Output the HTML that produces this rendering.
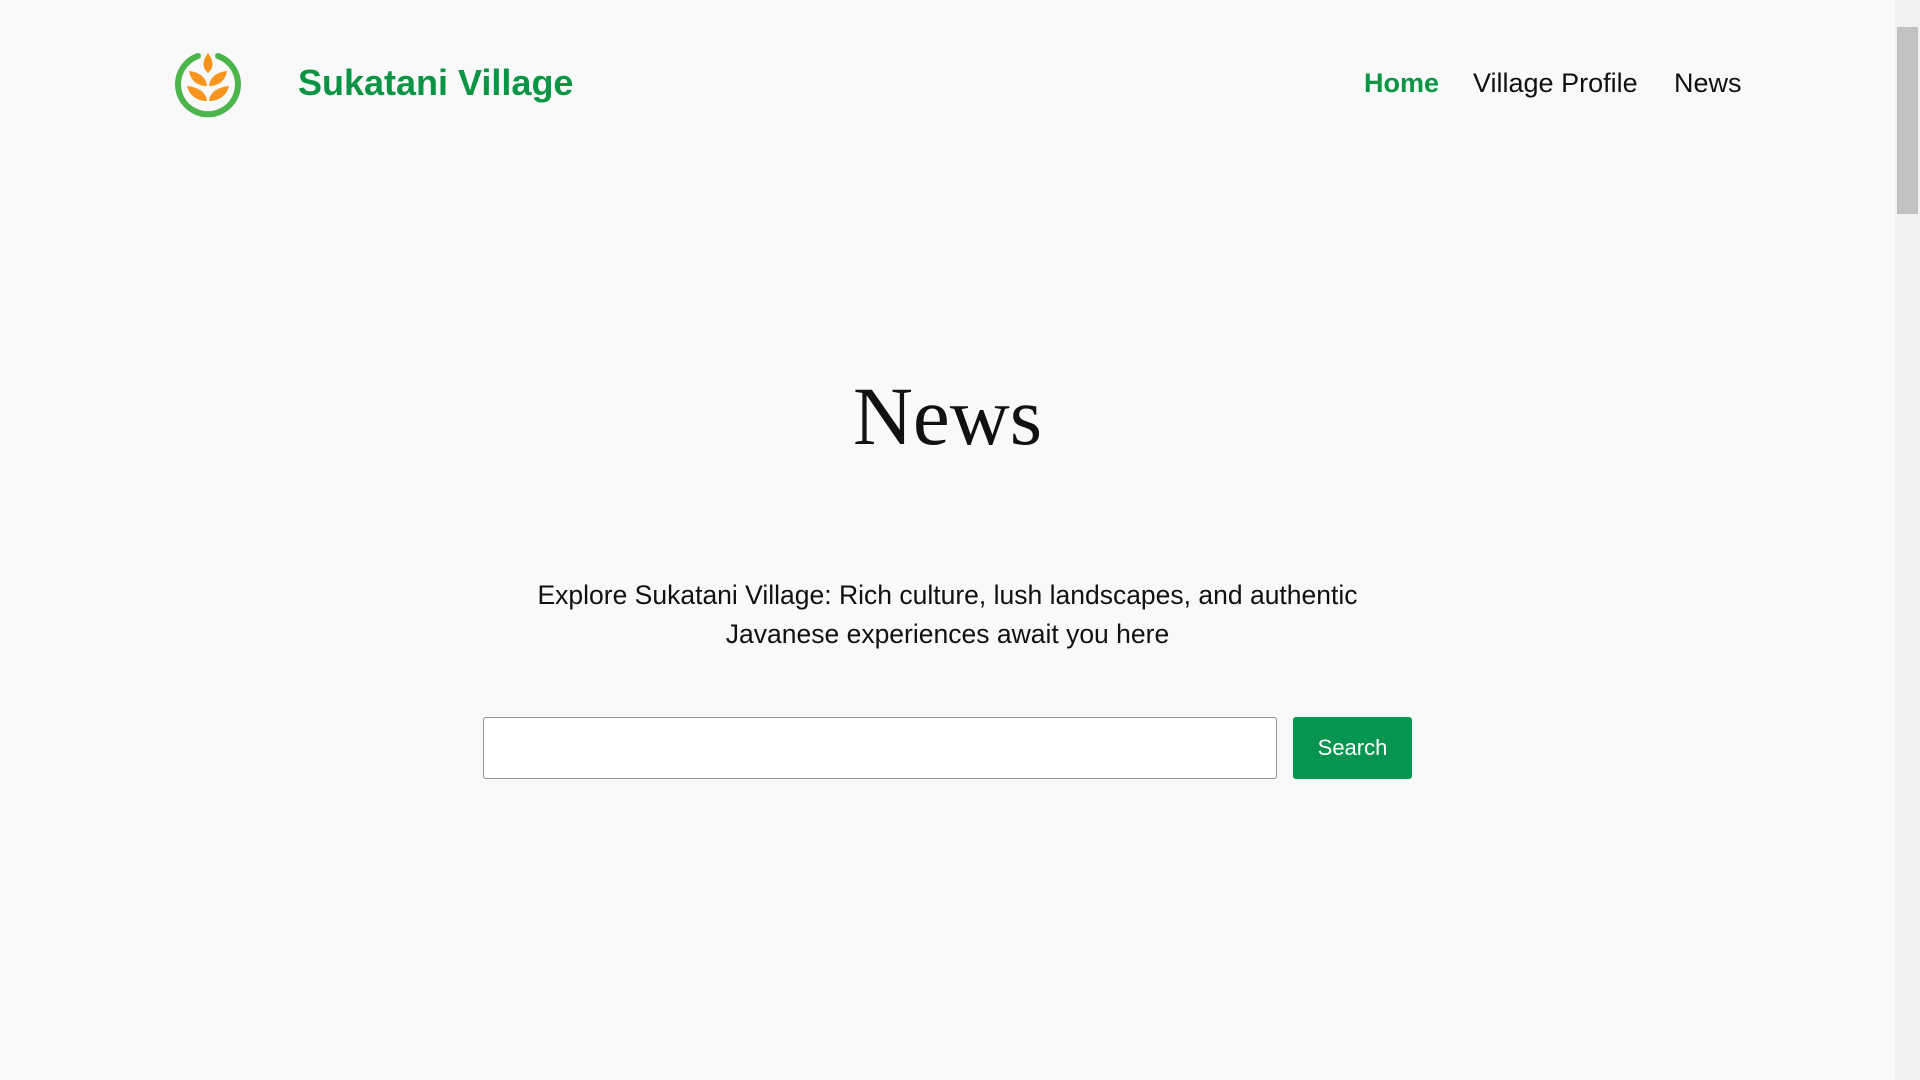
<!DOCTYPE html>
<html><head><meta charset="utf-8"><style>
html,body{margin:0;padding:0;width:1920px;height:1080px;overflow:hidden;background:#f9f9f9;font-family:"Liberation Sans",sans-serif;color:#111}
.logo{position:absolute;left:174px;top:50px}
.title{position:absolute;left:298px;top:60px;font-size:36px;font-weight:bold;color:#0b9444;line-height:46px}
.nav{position:absolute;top:67px;font-size:27px;line-height:32px}
h1{position:absolute;left:0;width:1895px;top:366px;margin:0;text-align:center;font-family:"Liberation Serif",serif;font-weight:normal;font-size:83px;line-height:100px;color:#111}
p{position:absolute;left:0;width:1895px;top:576px;margin:0;text-align:center;font-size:26.5px;line-height:39px}
.inp{position:absolute;left:483px;top:717px;width:792px;height:60px;border:1px solid #949494;border-radius:3px;background:#fff}
.btn{position:absolute;left:1293px;top:717px;width:119px;height:62px;background:#069550;border-radius:3px;color:#fff;font-size:22px;line-height:62px;text-align:center}
.sb{position:absolute;left:1895px;top:0;width:25px;height:1080px;background:#f1f1f1}
.th{position:absolute;left:2px;top:27px;width:21px;height:187px;background:#c1c1c1}
</style></head><body>
<svg class="logo" width="68" height="68" viewBox="0 0 68 68">
<path d="M24 6 A30 30 0 1 0 44 6" fill="none" stroke="#4bb44b" stroke-width="6" stroke-linecap="round"/>
<path d="M34 3 C28 11 28 18 34 23 C40 18 40 11 34 3Z" fill="#f7941d"/>
<path d="M15 21 C17 33 26 36 33 36 C32 27 25 22 15 21Z" fill="#f7941d"/>
<path d="M53 21 C51 33 42 36 35 36 C36 27 43 22 53 21Z" fill="#f7941d"/>
<path d="M13 36 C16 48 26 51 33 51 C32 42 24 37 13 36Z" fill="#f7941d"/>
<path d="M55 36 C52 48 42 51 35 51 C36 42 44 37 55 36Z" fill="#f7941d"/>
</svg>
<div class="title">Sukatani Village</div>
<div class="nav" style="left:1364px;color:#0b9444;font-weight:bold">Home</div>
<div class="nav" style="left:1473px">Village Profile</div>
<div class="nav" style="left:1674px">News</div>
<h1>News</h1>
<p>Explore Sukatani Village: Rich culture, lush landscapes, and authentic<br>Javanese experiences await you here</p>
<div class="inp"></div>
<div class="btn">Search</div>
<div class="sb"><div class="th"></div></div>
</body></html>
